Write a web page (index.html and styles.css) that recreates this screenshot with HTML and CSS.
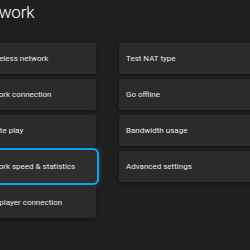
FILE: index.html
```html
<!DOCTYPE html>
<html lang="en">
<head>
    <meta charset="UTF-8">
    <meta name="viewport" content="width=device-width, initial-scale=1.0">
    <title>Network</title>
    <link rel="stylesheet" href="styles.css">
</head>
<body>
    <div class="page">
        <h1 class="title">Network</h1>
        <div class="grid">
            <div class="column">
                <div class="tile">Set up wireless network</div>
                <div class="tile">Test network connection</div>
                <div class="tile">Test remote play</div>
                <div class="tile focused">Test network speed &amp; statistics</div>
                <div class="tile">Test multiplayer connection</div>
            </div>
            <div class="column">
                <div class="tile">Test NAT type</div>
                <div class="tile">Go offline</div>
                <div class="tile">Bandwidth usage</div>
                <div class="tile">Advanced settings</div>
            </div>
        </div>
    </div>
</body>
</html>
```

FILE: styles.css
```css
html, body {
    margin: 0;
    overflow: hidden;
}

body {
    font-family: 'Roboto', sans-serif;
    background-color: #1f1f1f;
    color: #ffffff;
    width: 250px;
    height: 250px;
}

.page {
    margin-left: -43px;
    width: 330px;
}

.title {
    margin: 0;
    padding-left: 16px;
    font-size: 17px;
    font-weight: 300;
    letter-spacing: -0.2px;
    line-height: 24px;
}

.grid {
    display: flex;
    gap: 23px;
    margin-top: 19px;
}

.column {
    display: flex;
    flex-direction: column;
    gap: 5px;
    width: 139px;
}

.tile {
    height: 31px;
    display: flex;
    align-items: center;
    padding-left: 7px;
    background-color: #2b2b2b;
    border-radius: 2px;
    box-shadow: 0 2px 3px rgba(0, 0, 0, 0.35);
    font-size: 8px;
    color: #e8e8e8;
    white-space: nowrap;
}

.tile.focused {
    background-color: #2e2e2e;
    border-radius: 3px;
    box-shadow: 0 0 0 1px #2e2e2e, 0 0 0 3px #1a9ee4, 0 0 5px 3px rgba(26, 158, 228, 0.45);
}
```
